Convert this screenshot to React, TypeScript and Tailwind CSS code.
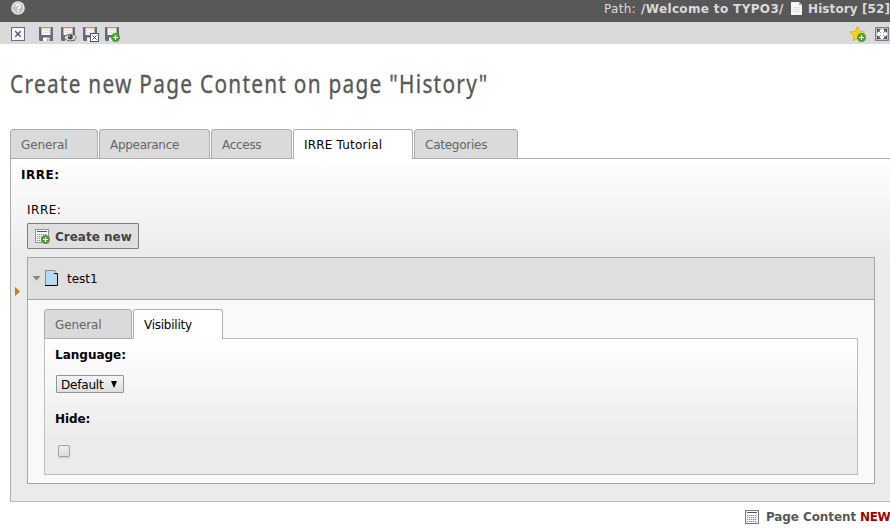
import React from 'react';

function Floppy({ children }: { children?: React.ReactNode }) {
  return (
    <svg width="17" height="16" viewBox="0 0 17 16" className="block shrink-0">
      <path d="M1 1h14v14H2l-1-1z" fill="#646c82" />
      <path d="M3.500 1h9v8h-9z" fill="#fafafa" />
      <path d="M3 1h10v1.300H3z" fill="#f08a1c" />
      <path d="M5 4.500h7M5 6.500h7" stroke="#cfcfcf" strokeDasharray="1 1" />
      <path d="M3 9h10v2H3z" fill="#646c82" />
      <path d="M5 11.500h6.500V15H5z" fill="#f6f7f9" />
      <path d="M9 12.500h1.500V15H9z" fill="#a2a7b3" />
      {children}
    </svg>
  );
}

function Plus({ x, y }: { x: number; y: number }) {
  return (
    <g transform={`translate(${x} ${y})`}>
      <circle cx="4.500" cy="4.500" r="4.500" fill="#4f9a3c" />
      <path d="M2 4.500h5M4.500 2v5" stroke="#fff" strokeWidth="1.2" />
    </g>
  );
}

function CloseIcon() {
  return (
    <svg width="14" height="14" viewBox="0 0 14 14" className="block shrink-0">
      <rect x=".5" y=".5" width="13" height="13" fill="#f5f6fa" stroke="#667085" />
      <path d="M4.300 4.300l5.400 5.400M9.700 4.300l-5.400 5.400" stroke="#4d5260" strokeWidth="1.3" />
    </svg>
  );
}

function TableIcon({ plus }: { plus?: boolean }) {
  return (
    <svg width="16" height="16" viewBox="0 0 16 16" className="block shrink-0">
      <rect x="1.500" y="1.500" width="13" height="13" fill="#fafafa" stroke={plus ? '#8b93a3' : '#777'} />
      <path d="M3 3.500h10" stroke="#555" />
      <path d="M3 6.500h10M3 8.500h10M3 10.500h10M3 12.500h10" stroke="#dcdcdc" />
      <path d="M3 6.500h10M3 8.500h10M3 10.500h10M3 12.500h10" stroke="#858585" strokeDasharray="1 1" />
      {plus && <Plus x={7} y={7} />}
    </svg>
  );
}

function Tab({ label, active, className }: { label: string; active?: boolean; className: string }) {
  return (
    <div
      className={`box-border h-[30px] whitespace-nowrap rounded-t-[3px] border border-[#adadad] pl-[10px] text-[12px] leading-[30px] ${
        active ? 'border-b-0 bg-white text-black' : 'bg-[#dadada] text-[#666]'
      } ${className}`}
    >
      {label}
    </div>
  );
}

export default function App() {
  return (
    <div className="h-[528px] w-[890px] overflow-hidden bg-white font-['DejaVu_Sans',sans-serif] text-[12px] text-black">
      <header className="flex h-[22px] items-start justify-between bg-[#585858] pl-[11px] text-[#dadada]">
        <svg width="15" height="16" viewBox="0 0 15 16" className="block">
          <circle cx="7" cy="8" r="6.800" fill="#e4e4e4" />
          <circle cx="7" cy="8" r="5.200" fill="#c2c2c2" />
          <path d="M5 6.500q0-2 2-2t2 1.800q0 1-2 2.200v1M7 10.600v1.400" fill="none" stroke="#fff" strokeWidth="1.5" />
        </svg>
        <div className="flex h-[18px] items-center whitespace-nowrap leading-[18px]">
          <span className="w-[37px] tracking-[0.3px]">Path:</span>
          <b className="w-[150px] tracking-[0.36px]">/Welcome to TYPO3/</b>
          <svg width="12" height="14" viewBox="0 0 12 14" className="mr-[5px] block">
            <path d="M0 0h8l3 3v10H0z" fill="#f4f4f4" />
            <path d="M8 0v3h3" fill="#aaa" />
            <path d="M2 5.500h7M2 7.500h7M2 9.500h7" stroke="#dedede" />
          </svg>
          <b className="w-[82px] tracking-[0.1px]">History [52]</b>
        </div>
      </header>

      <div className="flex h-[22px] items-center justify-between bg-[#dadada] pl-[11px] pr-px">
        <div className="flex items-center pt-[2px]">
          <CloseIcon />
          <div className="ml-[13px] flex gap-[5px]">
            <Floppy />
            <Floppy>
              <ellipse cx="10.300" cy="11.500" rx="5.800" ry="3.300" fill="#e4e4e4" stroke="#6b6b6b" />
              <circle cx="10.300" cy="11" r="2.500" fill="#444" />
              <circle cx="9.500" cy="10.200" r=".7" fill="#ddd" />
            </Floppy>
            <Floppy>
              <rect x="8.500" y="7.500" width="8" height="8" fill="#fff" stroke="#4d5568" />
              <path d="M10.500 9.500l4 4M14.500 9.500l-4 4" stroke="#444" />
            </Floppy>
            <Floppy>
              <Plus x={7} y={7} />
            </Floppy>
          </div>
        </div>
        <div className="flex items-center gap-[9px] pt-[2px]">
          <svg width="16" height="16" viewBox="0 0 16 16" className="block">
            <path d="M7.500 .5l2.200 4.800 5.300.6-4 3.600 1.100 5.200-4.600-2.600L3 14.700l1-5.200L0 5.900l5.300-.6z" fill="#f9d327" stroke="#e0a923" strokeWidth=".8" />
            <Plus x={7} y={7} />
          </svg>
          <svg width="14" height="14" viewBox="0 0 14 14" className="block">
            <rect x=".75" y=".75" width="12.500" height="12.500" fill="#fff" stroke="#6b7285" strokeWidth="1.3" />
            <path d="M2 2h4L2 6zM12 2v4L8 2zM2 12V8l4 4zM12 12H8l4-4z" fill="#42454d" />
            <path d="M3 3l2.700 2.700M11 3L8.300 5.700M3 11l2.700-2.700M11 11L8.300 8.300" stroke="#62656d" />
          </svg>
        </div>
      </div>

      <h1 className="ml-[10px] mt-[19px] h-[40px] w-[600px] origin-left scale-x-[0.8] whitespace-nowrap font-['Noto_Sans',sans-serif] text-[26px] leading-[40px] tracking-[1.600px] text-[#585858] [-webkit-text-stroke:0.35px_#585858]">
        Create new Page Content on page "History"
      </h1>

      <main className="ml-[10px] mt-[26px]">
        <nav className="relative -mb-px flex gap-px">
          <Tab label="General" className="w-[88px] tracking-[-0.1px]" />
          <Tab label="Appearance" className="w-[111px] tracking-[-0.3px]" />
          <Tab label="Access" className="w-[81px] tracking-[-0.3px]" />
          <Tab label="IRRE Tutorial" active className="w-[120px] tracking-[0.2px]" />
          <Tab label="Categories" className="w-[104px] tracking-[-0.25px]" />
        </nav>

        <section className="h-[344px] border-y border-l border-[#adadad] border-b-[#bdbdbd] bg-[#ebebeb] bg-[linear-gradient(#fff,#ebebeb_100px)] bg-no-repeat">
          <div className="h-[31px] pl-[10px] font-bold leading-[32px] tracking-[0.5px]">IRRE:</div>
          <div className="flex">
            <div className="flex w-[16px] shrink-0 pl-[4px] pt-[97px]">
              <svg width="5" height="9" viewBox="0 0 5 9" className="block">
                <path d="M0 0l5 4.500L0 9z" fill="#c47a18" />
              </svg>
            </div>
            <div className="w-[848px] shrink-0">
              <div className="h-[33px] leading-[40px] tracking-[0.5px]">IRRE:</div>
              <button className="flex h-[26px] w-[112px] items-center rounded-[1px] border border-[#7d7d7d] bg-[#dfdfdf] pl-[6px] font-bold text-[#434343]">
                <TableIcon plus />
                <span className="ml-[5px] whitespace-nowrap pt-px leading-[26px]">Create new</span>
              </button>

              <article className="mt-[8px] h-[227px] border border-[#a6a6a6] bg-[#f9f9f9]">
                <div className="flex h-[42px] items-center border-b border-[#a6a6a6] bg-[#dfdfdf] pl-[4px]">
                  <svg width="9" height="5" viewBox="0 0 9 5" className="block">
                    <path d="M.5 0h8L4.500 4.500z" fill="#8b857b" />
                  </svg>
                  <svg width="14" height="16" viewBox="0 0 14 16" className="mb-px ml-[4px] block">
                    <path d="M.5 15V.5H10L12.500 3V15z" fill="#b4dbf1" />
                    <path d="M.5 15V.5H10L11 2" fill="none" stroke="#8b8b8b" />
                    <path d="M9 3.500H12.500V15.500H0" fill="none" stroke="#000" />
                  </svg>
                  <span className="ml-[8px]">test1</span>
                </div>
                <div className="ml-[16px] mt-[9px] w-[814px]">
                  <div className="relative -mb-px flex gap-px">
                    <Tab label="General" className="w-[88px] tracking-[-0.1px]" />
                    <Tab label="Visibility" active className="w-[90px] tracking-[-0.25px]" />
                  </div>
                  <div className="h-[137px] border border-[#bdbdbd] bg-[#ebebeb] bg-[linear-gradient(#fff,#ebebeb_100px)] pl-[10px]">
                    <div className="h-[36px] font-bold leading-[32px]">Language:</div>
                    <div className="ml-px flex h-[18px] w-[68px] items-center rounded-[1px] border border-[#949494] bg-linear-to-b from-[#f4f4f4] to-[#dedede] pl-[4px]">
                      <span className="w-[50px] pt-px tracking-[-0.2px]">Default</span>
                      <svg width="6" height="7" viewBox="0 0 6 7" className="block">
                        <path d="M0 0h6L3 7z" fill="#000" />
                      </svg>
                    </div>
                    <div className="h-[52px] pt-[10px] font-bold leading-[32px] tracking-[-0.1px]">Hide:</div>
                    <div className="ml-[3px] h-[12px] w-[12px] rounded-[2px] border border-[#a3a3a3] bg-linear-to-b from-[#eee] to-[#dcdcdc] shadow-[0_1px_1px_#ccc]" />
                  </div>
                </div>
              </article>
            </div>
          </div>
        </section>
      </main>

      <footer className="flex items-center whitespace-nowrap pl-[744px] pt-[6px] font-bold leading-[18px] text-[#585858]">
        <TableIcon />
        <span className="ml-[6px] w-[94px] shrink-0 tracking-[-0.1px]">Page Content</span>
        <span className="tracking-[-0.4px] text-[#990000]">NEW</span>
      </footer>
    </div>
  );
}
